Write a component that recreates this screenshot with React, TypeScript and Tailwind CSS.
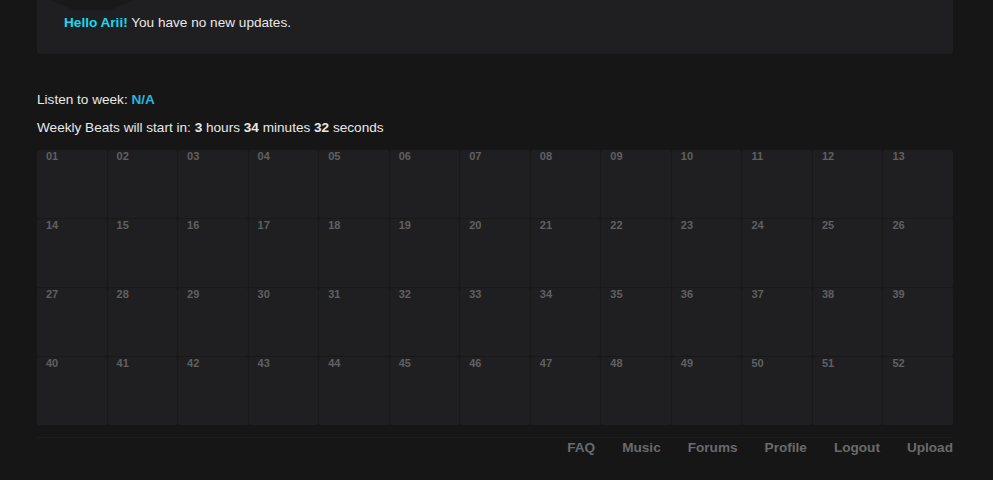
const weeks = Array.from({ length: 52 }, (_, i) => String(i + 1).padStart(2, '0'))

const links = ['FAQ', 'Music', 'Forums', 'Profile', 'Logout', 'Upload']

export default function App() {
  return (
    <div className="min-h-[480px] w-full bg-[#161617] font-['Liberation_Sans',Arial,sans-serif] text-[13.6px] text-[#e8e8e8]">
      <div className="mx-[37px] w-[916px]">
        {/* notice panel */}
        <div className="relative h-[54px] rounded-b-[3px] bg-[#1f1f21] pl-[27px] pt-[15px]">
          <svg className="absolute left-[13px] top-0" width="84" height="10" viewBox="0 0 84 10">
            <polygon points="0,0 84,0 60,10 24,10" fill="#19191a" />
          </svg>
          <p className="relative leading-[16px]">
            <span className="font-bold text-[#1ed8ec]">Hello Arii!</span> You have no new updates.
          </p>
        </div>

        <p className="mt-[38px] leading-[16px]">
          Listen to week: <span className="font-bold text-[#27b8dc]">N/A</span>
        </p>
        <p className="mt-[12px] leading-[16px]">
          Weekly Beats will start in: <b>3</b> hours <b>34</b> minutes <b>32</b> seconds
        </p>

        <div className="mt-[14px] grid grid-cols-13 gap-px rounded-[3px] bg-[#19191a]">
          {weeks.map(w => (
            <div key={w} className="h-[68px] rounded-[2px] bg-[#1f1f21] px-[9px] pt-0 leading-[12px]">
              <span className="text-[11px] font-bold text-[#606062]">{w}</span>
            </div>
          ))}
        </div>

        <div className="mt-[12px] flex h-[19px] items-end justify-end gap-[27px] border-t border-[#1d1d1f] leading-[16px]">
          {links.map(l => (
            <a key={l} className="font-bold text-[#6a6a6c]">
              {l}
            </a>
          ))}
        </div>
      </div>
    </div>
  )
}
